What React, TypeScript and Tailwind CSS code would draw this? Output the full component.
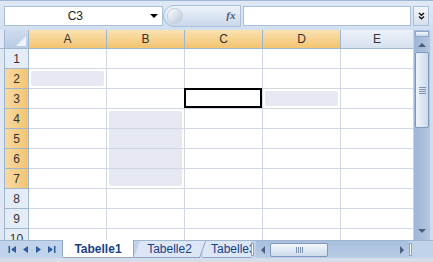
import React from 'react';

const COLS = ['A', 'B', 'C', 'D', 'E'];
const SEL_COLS = ['A', 'B', 'C', 'D'];
const ROWS = [1, 2, 3, 4, 5, 6, 7, 8, 9, 10];
const SEL_ROWS = [2, 3, 4, 5, 6, 7];

// faded parts of the multi selection, by shape of the cell inside its range
const GHOST: Record<string, string> = {
  A2: 'left-[2px] right-[2px] top-[2px] bottom-[2px] rounded-[2px]',
  D3: 'left-[2px] right-[2px] top-[2px] bottom-[2px] rounded-[2px]',
  B4: 'left-[2px] right-[2px] top-[2px] bottom-0 rounded-t-[2px]',
  B5: 'left-[2px] right-[2px] top-0 bottom-0',
  B6: 'left-[2px] right-[2px] top-0 bottom-0',
  B7: 'left-[2px] right-[2px] top-0 bottom-[2px] rounded-b-[2px]',
};
const ACTIVE = 'C3';

function ColHeader({ label }: { label: string }) {
  const sel = SEL_COLS.includes(label);
  return (
    <div
      className={
        'h-full flex items-center justify-center border-r border-[#9eb6ce] text-[12px] text-[#333] ' +
        (sel
          ? 'bg-gradient-to-b from-[#fae2b0] to-[#f3c470]'
          : 'bg-gradient-to-b from-[#edf2f9] to-[#d6e1ef]') +
        (label === 'E' ? ' w-[72px] border-r-0' : ' w-[78px]')
      }
    >
      {label}
    </div>
  );
}

function Cell({ id, last }: { id: string; last: boolean }) {
  const ghost = GHOST[id];
  const active = id === ACTIVE;
  return (
    <div
      className={
        'relative h-full border-b border-[#d0d7e5] ' +
        (last ? 'w-[72px]' : 'w-[78px] border-r')
      }
    >
      {ghost && <div className={'absolute bg-[#e7e9f2] ' + ghost} />}
      {active && <div className="absolute -left-[1px] -top-[1px] right-0 bottom-0 border-2 border-black" />}
    </div>
  );
}

function NavIcon({ dir, bar }: { dir: 'l' | 'r'; bar?: boolean }) {
  return (
    <svg width="9" height="9" viewBox="0 0 9 9">
      {dir === 'l' ? (
        <>
          {bar && <rect x="0.5" y="1" width="1.5" height="7" fill="#2f5b9a" />}
          <polygon points={bar ? '8,1 3,4.5 8,8' : '7,1 2,4.5 7,8'} fill="#2f5b9a" />
        </>
      ) : (
        <>
          <polygon points={bar ? '1,1 6,4.5 1,8' : '2,1 7,4.5 2,8'} fill="#2f5b9a" />
          {bar && <rect x="7" y="1" width="1.5" height="7" fill="#2f5b9a" />}
        </>
      )}
    </svg>
  );
}

export default function App() {
  return (
    <div className="w-[433px] h-[262px] overflow-hidden flex flex-col bg-[#cddcef] font-['Liberation_Sans',sans-serif]">
      {/* formula bar */}
      <div className="h-[30px] shrink-0 flex items-center pl-[4px] pr-[4px] border-t border-[#9fb6d5] bg-gradient-to-b from-[#dfe9f6] to-[#d2dff0]">
        <div className="w-[159px] h-[20px] flex items-center bg-white border border-[#a9bfd6]">
          <div className="flex-1 text-center text-[12px] text-[#222]">C3</div>
          <div className="w-[16px] flex items-center justify-center">
            <div className="w-0 h-0 border-l-[4px] border-r-[4px] border-t-[4px] border-l-transparent border-r-transparent border-t-black" />
          </div>
        </div>
        <div className="w-[79px] h-[22px] flex items-center justify-between rounded-l-full border border-[#a9bfd6] bg-gradient-to-b from-[#eef3fa] to-[#c9d8ec] pl-[3px] pr-[3px]">
          <div className="w-[16px] h-[16px] rounded-full bg-gradient-to-br from-[#ffffff] to-[#b9c6d6] border border-[#c4d0df]" />
          <span className="font-['Liberation_Serif',serif] italic font-bold text-[11px] text-[#4d5d73] pr-[2px]">fx</span>
        </div>
        <div className="ml-[2px] w-[168px] h-[20px] bg-white border border-[#a9bfd6]" />
        <div className="ml-[2px] w-[16px] h-[20px] flex items-center justify-center border border-[#a9bfd6] bg-gradient-to-b from-[#f4f7fb] to-[#d4dfed]">
          <svg width="7" height="8" viewBox="0 0 7 8">
            <polyline points="1,1 3.5,3.2 6,1" fill="none" stroke="#111" strokeWidth="1.4" />
            <polyline points="1,4.5 3.5,6.7 6,4.5" fill="none" stroke="#111" strokeWidth="1.4" />
          </svg>
        </div>
      </div>

      {/* sheet */}
      <div className="flex h-[210px] shrink-0">
        <div className="w-[413px] flex flex-col bg-white overflow-hidden">
          <div className="h-[19px] shrink-0 flex border-b border-[#9eb6ce]">
            <div className="w-[29px] h-full bg-[#dfe8f4] pl-[4px]">
              <div className="relative h-full border-r border-l border-[#9eb6ce] bg-gradient-to-b from-[#cfdcee] to-[#b8cbe4]">
                <div className="absolute right-[2px] bottom-[2px] w-0 h-0 border-l-[10px] border-l-transparent border-b-[10px] border-b-[#eef3fa]" />
              </div>
            </div>
            {COLS.map((c) => (
              <ColHeader key={c} label={c} />
            ))}
          </div>
          {ROWS.map((r) => {
            const sel = SEL_ROWS.includes(r);
            return (
              <div key={r} className="h-[20px] shrink-0 flex">
                <div className="w-[29px] h-full bg-[#dfe8f4] pl-[4px]">
                  <div
                    className={
                      'h-full flex items-center justify-center border-b border-r border-l border-[#9eb6ce] text-[12px] text-[#333] ' +
                      (sel ? 'bg-gradient-to-r from-[#f9d9a0] to-[#f3c572]' : 'bg-[#e4ecf7]')
                    }
                  >
                    {r}
                  </div>
                </div>
                {COLS.map((c, i) => (
                  <Cell key={c} id={c + r} last={i === COLS.length - 1} />
                ))}
              </div>
            );
          })}
        </div>

        {/* vertical scrollbar */}
        <div className="w-[17px] flex flex-col bg-gradient-to-r from-[#9fb5d7] to-[#b3c6e1] border-l border-[#c6d4e7]">
          <div className="h-[6px] mx-[1px] mt-[1px] bg-gradient-to-b from-[#f5f8fc] to-[#cbd8ea] border border-[#8ea6c8]" />
          <div className="h-[15px] flex items-center justify-center">
            <div className="w-0 h-0 border-l-[4px] border-r-[4px] border-b-[4px] border-l-transparent border-r-transparent border-b-[#4a5f7f]" />
          </div>
          <div className="h-[76px] mx-[1px] rounded-[2px] border border-[#7f99bd] bg-gradient-to-r from-[#eef3fa] to-[#ccdaec] flex flex-col items-center justify-center gap-[1px]">
            <div className="w-[7px] h-[1px] bg-[#7d93b2]" />
            <div className="w-[7px] h-[1px] bg-[#7d93b2]" />
            <div className="w-[7px] h-[1px] bg-[#7d93b2]" />
            <div className="w-[7px] h-[1px] bg-[#7d93b2]" />
          </div>
          <div className="flex-1" />
          <div className="h-[18px] flex items-center justify-center">
            <div className="w-0 h-0 border-l-[4px] border-r-[4px] border-t-[4px] border-l-transparent border-r-transparent border-t-[#4a5f7f]" />
          </div>
        </div>
        <div className="w-[3px] bg-[#cddcef]" />
      </div>

      {/* tabs and horizontal scrollbar */}
      <div className="h-[18px] shrink-0 flex items-stretch bg-[#c1d3ea] border-t border-[#9eb6ce]">
        <div className="w-[62px] flex items-center justify-around pl-[6px] pr-[4px]">
          <NavIcon dir="l" bar />
          <NavIcon dir="l" />
          <NavIcon dir="r" />
          <NavIcon dir="r" bar />
        </div>
        <div className="w-[72px] -mt-[1px] flex items-center justify-center bg-white border-x border-b border-[#8da6c7] rounded-b-[2px] text-[12px] font-bold text-[#15428b]">
          Tabelle1
        </div>
        <div className="w-[66px] flex items-center justify-center bg-[#dce6f4] border-b border-r border-[#8da6c7] text-[12px] text-[#15428b] skew-x-[-20deg] ml-[3px]">
          <span className="skew-x-[20deg]">Tabelle2</span>
        </div>
        <div className="w-[48px] overflow-hidden flex items-center pl-[8px] bg-[#dce6f4] border-b border-[#8da6c7] text-[12px] text-[#15428b] whitespace-nowrap">
          Tabelle3
        </div>
        <div className="w-[3px] my-[2px] bg-white border border-[#8da6c7]" />
        <div className="w-[153px] ml-[2px] flex items-center bg-gradient-to-b from-[#a9bfde] to-[#b9cce5]">
          <div className="w-[14px] flex items-center justify-center">
            <div className="w-0 h-0 border-t-[4px] border-b-[4px] border-r-[4px] border-t-transparent border-b-transparent border-r-[#4a5f7f]" />
          </div>
          <div className="w-[58px] h-[14px] rounded-[2px] border border-[#7f99bd] bg-gradient-to-b from-[#f4f7fb] to-[#ccdaec] flex items-center justify-center gap-[1px]">
            <div className="w-[1px] h-[6px] bg-[#7d93b2]" />
            <div className="w-[1px] h-[6px] bg-[#7d93b2]" />
            <div className="w-[1px] h-[6px] bg-[#7d93b2]" />
            <div className="w-[1px] h-[6px] bg-[#7d93b2]" />
          </div>
          <div className="flex-1" />
          <div className="w-[14px] flex items-center justify-center">
            <div className="w-0 h-0 border-t-[4px] border-b-[4px] border-l-[4px] border-t-transparent border-b-transparent border-l-[#4a5f7f]" />
          </div>
        </div>
        <div className="w-[3px] my-[2px] bg-white border border-[#8da6c7]" />
      </div>
      <div className="flex-1 bg-[#d4dde9]" />
    </div>
  );
}
